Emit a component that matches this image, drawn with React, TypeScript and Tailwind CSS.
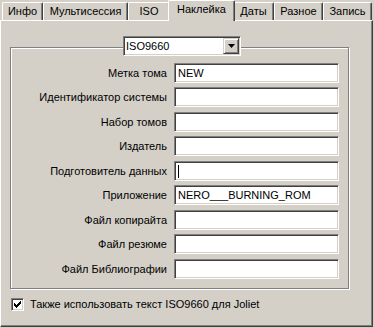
import React from "react";

const raisedTab =
  "border-t border-l border-r border-t-white border-l-white border-r-[#404040] shadow-[inset_-1px_0_0_#808080] rounded-t-[2px]";

const sunken =
  "border border-t-[#808080] border-l-[#808080] border-b-white border-r-white shadow-[inset_1px_1px_0_#404040,inset_-1px_-1px_0_#d4d0c8] bg-white";

function Tab({ label, w, active }: { label: string; w: string; active?: boolean }) {
  if (active) {
    return (
      <div
        className={`${raisedTab} ${w} h-[21px] -mx-[2px] relative z-10 bg-[#d4d0c8] flex items-start justify-center pt-[2px] mb-[-1px]`}
      >
        <span>{label}</span>
      </div>
    );
  }
  return (
    <div className={`${raisedTab} ${w} h-[18px] flex items-center justify-center`}>
      <span>{label}</span>
    </div>
  );
}

const rows: { label: string; value: string; caret?: boolean }[] = [
  { label: "Метка тома", value: "NEW" },
  { label: "Идентификатор системы", value: "" },
  { label: "Набор томов", value: "" },
  { label: "Издатель", value: "" },
  { label: "Подготовитель данных", value: "", caret: true },
  { label: "Приложение", value: "NERO___BURNING_ROM" },
  { label: "Файл копирайта", value: "" },
  { label: "Файл резюме", value: "" },
  { label: "Файл Библиографии", value: "" },
];

export default function App() {
  return (
    <div
      className="w-[374px] h-[328px] bg-[#d4d0c8] text-black text-[11px] leading-[13px] overflow-hidden"
      style={{ fontFamily: '"Liberation Sans", Arial, sans-serif' }}
    >
      {/* tab strip */}
      <div className="flex items-end h-[20px] pl-[2px]">
        <Tab label="Инфо" w="w-[41px]" />
        <Tab label="Мультисессия" w="w-[85px]" />
        <Tab label="ISO" w="w-[42px]" />
        <Tab label="Наклейка" w="w-[67px]" active />
        <Tab label="Даты" w="w-[41px]" />
        <Tab label="Разное" w="w-[49px]" />
        <Tab label="Запись" w="w-[49px]" />
      </div>
      {/* panel */}
      <div className="w-[373px] h-[307px] border-t border-l border-r border-b border-t-white border-l-white border-r-[#404040] border-b-[#404040] shadow-[inset_-1px_-1px_0_#808080] pt-[26px] pl-[9px]">
        {/* group box */}
        <div className="relative w-[339px] h-[242px] border border-[#808080] shadow-[1px_1px_0_#fff,inset_1px_1px_0_#fff] pt-[15px]">
          {/* combo */}
          <div className="absolute left-[112px] top-[-12px] w-[118px] h-[20px] bg-[#d4d0c8] flex">
            <div className={`${sunken} flex-1 flex items-center pl-[2px] relative`}>
              <span>ISO9660</span>
              <div className="absolute right-[1px] top-[1px] w-[16px] h-[16px] bg-[#d4d0c8] border border-t-[#d4d0c8] border-l-[#d4d0c8] border-b-[#404040] border-r-[#404040] shadow-[inset_1px_1px_0_#fff,inset_-1px_-1px_0_#808080] flex items-center justify-center">
                <svg width="7" height="4" viewBox="0 0 7 4">
                  <path d="M0 0h7L3.5 4z" fill="#000" />
                </svg>
              </div>
            </div>
          </div>
          {rows.map((r, i) => (
            <div
              key={r.label}
              className={`flex items-center h-[20px] ${i === 0 ? "" : i % 2 === 1 ? "mt-[4px]" : "mt-[5px]"}`}
            >
              <div className="w-[156px] text-right pr-[0px]">{r.label}</div>
              <div className={`${sunken} ml-[7px] w-[165px] h-[20px] flex items-center pl-[3px]`}>
                {r.value && <span>{r.value}</span>}
                {r.caret && <span className="inline-block w-[1px] h-[13px] bg-black" />}
              </div>
            </div>
          ))}
        </div>
        {/* checkbox */}
        <div className="flex items-center mt-[9px] ml-[1px]">
          <div className={`${sunken} w-[13px] h-[13px] flex items-center justify-center`}>
            <svg width="7" height="7" viewBox="0 0 7 7" shapeRendering="crispEdges">
              <path
                d="M6 0h1v3h-1zM5 1h1v3h-1zM4 2h1v3h-1zM0 2h1v3h-1zM1 3h1v3h-1zM2 4h1v3h-1zM3 3h1v3h-1z"
                fill="#000"
              />
            </svg>
          </div>
          <span className="ml-[6px]">Также использовать текст ISO9660 для Joliet</span>
        </div>
      </div>
    </div>
  );
}
